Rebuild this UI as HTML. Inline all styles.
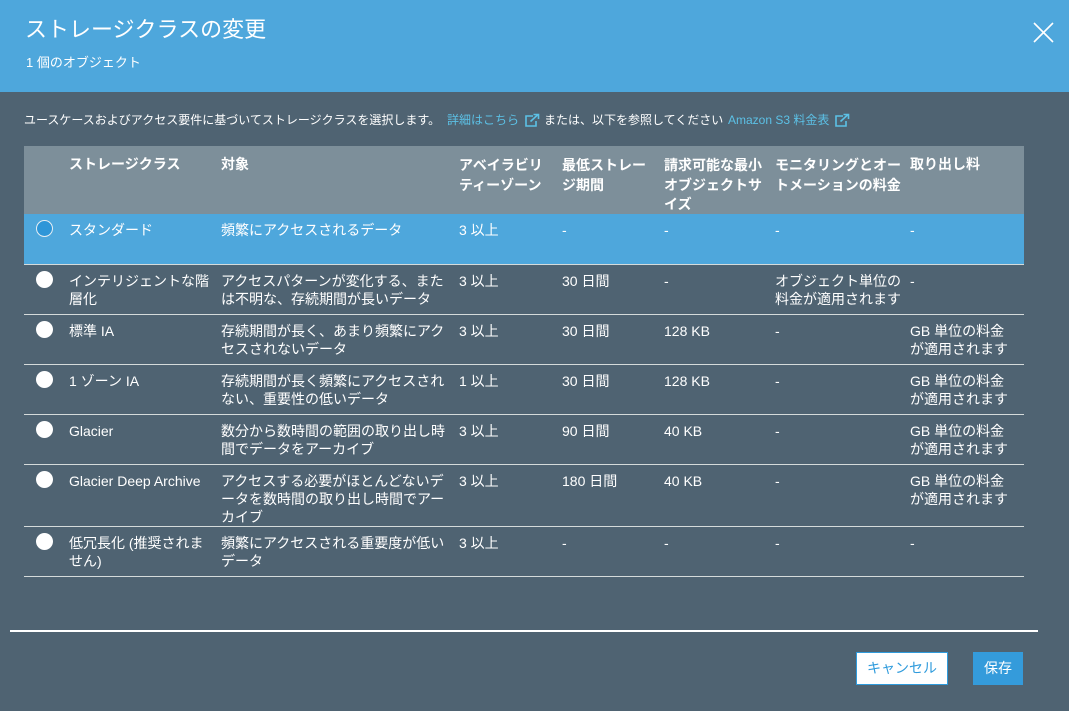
<!DOCTYPE html>
<html lang="ja"><head><meta charset="utf-8"><title>ストレージクラスの変更</title>
<style>
html,body{margin:0;padding:0;width:1069px;height:711px;overflow:hidden;background:#4f6372;color:#fff;font-family:"Liberation Sans","Noto Sans CJK JP",sans-serif;font-size:14px}
.a{position:absolute}
.t{position:absolute;line-height:18px;white-space:nowrap;font-size:14px;color:#fff}
.h{font-weight:700}
.l{position:absolute;left:24px;width:1000px;height:1px;background:#d5dbdb}
.r{position:absolute;left:36px;width:17px;height:17px;border-radius:50%;background:#fff;box-sizing:border-box}
a{color:#5cc1e6;text-decoration:none}
</style></head><body>
<div class="a" style="left:0;top:0;width:1069px;height:92px;background:#4ea7dc"></div>
<div class="t" style="left:25px;top:15px;font-size:22px;line-height:30px">ストレージクラスの変更</div>
<div class="t" style="left:26px;top:54px;font-size:13px">1 個のオブジェクト</div>
<svg class="a" style="left:1033px;top:22px" width="21" height="21" viewBox="0 0 21 21"><path d="M1 1L20 20M20 1L1 20" stroke="#fff" stroke-width="1.6" fill="none"/></svg>

<div class="t" style="left:24px;top:111px;font-size:12px">ユースケースおよびアクセス要件に基づいてストレージクラスを選択します。</div>
<div class="t" style="left:447px;top:111px;font-size:12px"><a>詳細はこちら</a></div>
<svg class="a" style="left:524px;top:113px" width="16" height="15" viewBox="0 0 16 15"><path d="M9 3H2V13H12V8M6.500 8.500L14 1.500M9.500 1.500H14.500V6" stroke="#5cc1e6" stroke-width="1.600" fill="none"/></svg>
<div class="t" style="left:544px;top:111px;font-size:12px">または、以下を参照してください</div>
<div class="t" style="left:728px;top:111px;font-size:12px"><a>Amazon S3 料金表</a></div>
<svg class="a" style="left:834px;top:113px" width="16" height="15" viewBox="0 0 16 15"><path d="M9 3H2V13H12V8M6.500 8.500L14 1.500M9.500 1.500H14.500V6" stroke="#5cc1e6" stroke-width="1.600" fill="none"/></svg>

<div class="a" style="left:24px;top:146px;width:1000px;height:68px;background:#7d8f9a"></div>
<div class="a" style="left:24px;top:214px;width:1000px;height:50px;background:#4ea7dc"></div>

<div class="t h" style="left:69px;top:155px">ストレージクラス</div>
<div class="t h" style="left:221px;top:155px">対象</div>
<div class="t h" style="left:459px;top:155px;line-height:20px">アベイラビリ<br>ティーゾーン</div>
<div class="t h" style="left:562px;top:155px;line-height:20px">最低ストレー<br>ジ期間</div>
<div class="t h" style="left:664px;top:155px;line-height:20px">請求可能な最小<br>オブジェクトサ</div>
<div class="t h" style="left:664px;top:194px;line-height:20px">イズ</div>
<div class="t h" style="left:775px;top:155px;line-height:20px">モニタリングとオー<br>トメーションの料金</div>
<div class="t h" style="left:910px;top:155px">取り出し料</div>

<div class="l" style="top:264px"></div><div class="l" style="top:314px"></div><div class="l" style="top:364px"></div><div class="l" style="top:414px"></div><div class="l" style="top:464px"></div><div class="l" style="top:526px"></div><div class="l" style="top:576px"></div>

<div class="r" style="top:220px;background:#2e96d8;border:1px solid #e6eef3"></div>
<div class="t" style="left:69px;top:221px">スタンダード</div>
<div class="t" style="left:221px;top:221px">頻繁にアクセスされるデータ</div>
<div class="t" style="left:459px;top:221px">3 以上</div>
<div class="t" style="left:562px;top:221px">-</div><div class="t" style="left:664px;top:221px">-</div><div class="t" style="left:775px;top:221px">-</div><div class="t" style="left:910px;top:221px">-</div>

<div class="r" style="top:271px"></div>
<div class="t" style="left:69px;top:272px">インテリジェントな階<br>層化</div>
<div class="t" style="left:221px;top:272px">アクセスパターンが変化する、また<br>は不明な、存続期間が長いデータ</div>
<div class="t" style="left:459px;top:272px">3 以上</div>
<div class="t" style="left:562px;top:272px">30 日間</div><div class="t" style="left:664px;top:272px">-</div>
<div class="t" style="left:775px;top:272px">オブジェクト単位の<br>料金が適用されます</div>
<div class="t" style="left:910px;top:272px">-</div>

<div class="r" style="top:321px"></div>
<div class="t" style="left:69px;top:322px">標準 IA</div>
<div class="t" style="left:221px;top:322px">存続期間が長く、あまり頻繁にアク<br>セスされないデータ</div>
<div class="t" style="left:459px;top:322px">3 以上</div>
<div class="t" style="left:562px;top:322px">30 日間</div><div class="t" style="left:664px;top:322px">128 KB</div><div class="t" style="left:775px;top:322px">-</div>
<div class="t" style="left:910px;top:322px">GB 単位の料金<br>が適用されます</div>

<div class="r" style="top:371px"></div>
<div class="t" style="left:69px;top:372px">1 ゾーン IA</div>
<div class="t" style="left:221px;top:372px">存続期間が長く頻繁にアクセスされ<br>ない、重要性の低いデータ</div>
<div class="t" style="left:459px;top:372px">1 以上</div>
<div class="t" style="left:562px;top:372px">30 日間</div><div class="t" style="left:664px;top:372px">128 KB</div><div class="t" style="left:775px;top:372px">-</div>
<div class="t" style="left:910px;top:372px">GB 単位の料金<br>が適用されます</div>

<div class="r" style="top:421px"></div>
<div class="t" style="left:69px;top:422px">Glacier</div>
<div class="t" style="left:221px;top:422px">数分から数時間の範囲の取り出し時<br>間でデータをアーカイブ</div>
<div class="t" style="left:459px;top:422px">3 以上</div>
<div class="t" style="left:562px;top:422px">90 日間</div><div class="t" style="left:664px;top:422px">40 KB</div><div class="t" style="left:775px;top:422px">-</div>
<div class="t" style="left:910px;top:422px">GB 単位の料金<br>が適用されます</div>

<div class="r" style="top:471px"></div>
<div class="t" style="left:69px;top:472px">Glacier Deep Archive</div>
<div class="t" style="left:221px;top:472px">アクセスする必要がほとんどないデ<br>ータを数時間の取り出し時間でアー<br>カイブ</div>
<div class="t" style="left:459px;top:472px">3 以上</div>
<div class="t" style="left:562px;top:472px">180 日間</div><div class="t" style="left:664px;top:472px">40 KB</div><div class="t" style="left:775px;top:472px">-</div>
<div class="t" style="left:910px;top:472px">GB 単位の料金<br>が適用されます</div>

<div class="r" style="top:533px"></div>
<div class="t" style="left:69px;top:534px">低冗長化 (推奨されま<br>せん)</div>
<div class="t" style="left:221px;top:534px">頻繁にアクセスされる重要度が低い<br>データ</div>
<div class="t" style="left:459px;top:534px">3 以上</div>
<div class="t" style="left:562px;top:534px">-</div><div class="t" style="left:664px;top:534px">-</div><div class="t" style="left:775px;top:534px">-</div><div class="t" style="left:910px;top:534px">-</div>

<div class="a" style="left:10px;top:630px;width:1028px;height:2px;background:#fff"></div>
<div class="t" style="left:856px;top:652px;width:92px;height:33px;box-sizing:border-box;background:#fff;border:1px solid #2f9bdc;color:#2f9bdc;text-align:center;line-height:31px">キャンセル</div>
<div class="t" style="left:973px;top:652px;width:50px;height:33px;background:#349bdb;text-align:center;line-height:33px">保存</div>
</body></html>
